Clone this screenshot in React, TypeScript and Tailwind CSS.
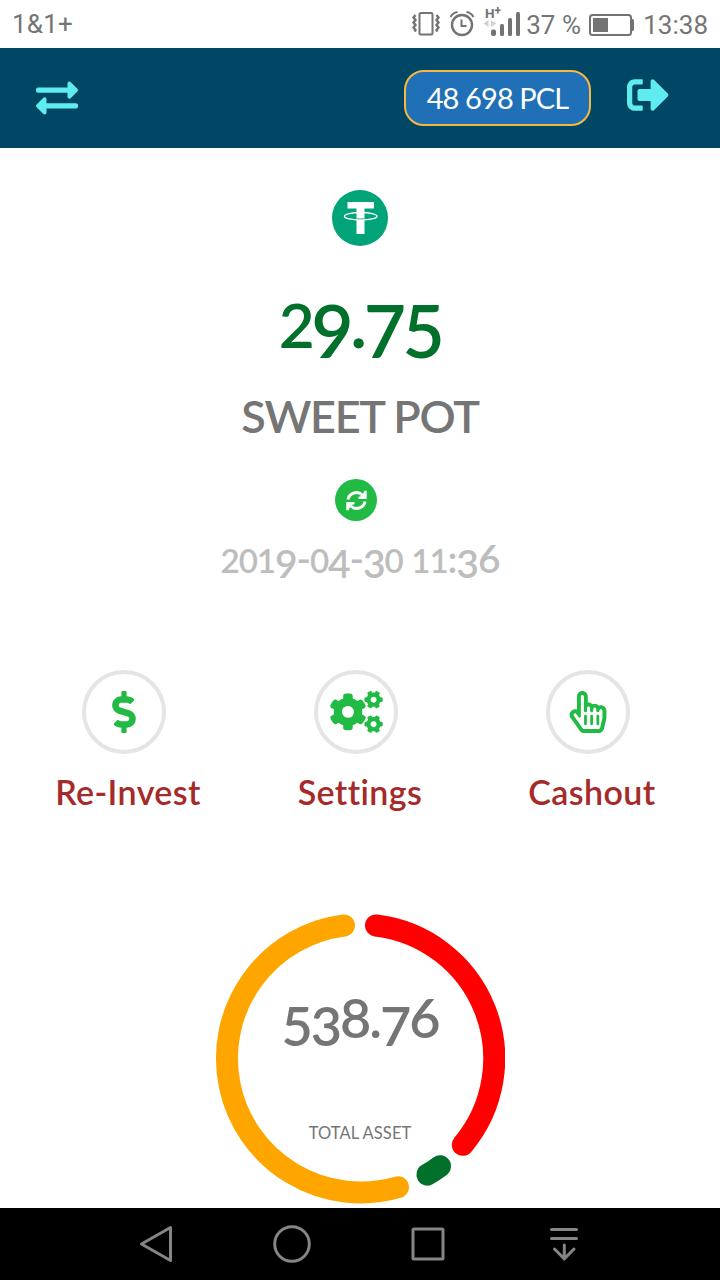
import type { ReactNode } from "react";
import { FaCogs, FaDollarSign, FaExchangeAlt, FaRegHandPointer, FaSignOutAlt } from "react-icons/fa";

interface Action {
  label: string;
  icon: ReactNode;
  tracking: string;
}

const ACTIONS: Action[] = [
  { label: "Re-Invest", icon: <FaDollarSign className="h-[42px] w-auto" />, tracking: "tracking-[0.4px]" },
  { label: "Settings", icon: <FaCogs className="h-[42px] w-[53px] shrink-0" />, tracking: "tracking-[0.4px]" },
  { label: "Cashout", icon: <FaRegHandPointer className="h-[42px] w-auto" />, tracking: "tracking-[0.4px]" },
];

// Donut segments, drawn clockwise around (145, 145) with r = 134.
const SEGMENTS = [
  { color: "#ff0000", d: "M161 11.5A134 134 0 0 1 247.8 230.8" },
  { color: "#00702a", d: "M225 252.2A134 134 0 0 1 212.4 260.6" },
  { color: "#ffa500", d: "M183 273.2A134 134 0 1 1 129 11.5" },
];

// Old-style figures: 0-2 sit at x-height, 3 4 5 7 9 hang below the baseline.
function OldStyle({ value }: { value: string }) {
  return (
    <>
      {value.split("").map((c, i) => {
        if ("012".includes(c)) return <span key={i} className="text-[0.85em] leading-[0]">{c}</span>;
        if ("34579".includes(c)) return <span key={i} className="align-[-0.14em] leading-[0]">{c}</span>;
        return <span key={i}>{c}</span>;
      })}
    </>
  );
}

function StatusBar() {
  return (
    <div className="flex h-12 items-center bg-white pl-3 pr-[12px] font-['Roboto'] text-[26px] leading-[48px] text-[#757575]">
      <span className="tracking-[0.2px]">1&amp;1+</span>
      <svg className="ml-auto h-12 w-[112px] shrink-0" viewBox="410 0 112 48" fill="none" stroke="#737373" strokeWidth="2">
        {/* vibrate */}
        <rect x="419.5" y="13" width="13" height="21.5" rx="1.5" />
        <path d="M415.500 15l-2 2.500 2 2.500-2 2.500 2 2.500-2 2.500 2 2.500-1 1.500M436.500 15l2 2.500-2 2.500 2 2.500-2 2.500 2 2.500-2 2.500 1 1.500" strokeWidth="2.400" />
        {/* alarm */}
        <circle cx="462" cy="25" r="10" strokeWidth="2.400" />
        <path d="M461.500 19.500v6.500h5M450.500 17q2-4 7-5M473.500 17q-2-4-7-5" />
        {/* signal */}
        <g stroke="none" fill="#737373">
          <rect x="491" y="29.500" width="5" height="6.500" rx="2" />
          <rect x="500" y="24" width="4" height="12" rx="1.500" />
          <rect x="508" y="18" width="4" height="18" rx="1.500" />
          <rect x="516" y="12" width="4" height="24" rx="1.500" />
          <path d="M483.500 23.500l5-3.500v7zM496 23.500l-5-3.500v7z" fill="#d0d0d0" />
          <text x="485" y="18" fontSize="13.500" fontWeight="700" fontFamily="Roboto">H</text>
          <text x="494.500" y="15" fontSize="12" fontWeight="700" fontFamily="Roboto">+</text>
        </g>
      </svg>
      <span className="ml-1 w-[54px] whitespace-nowrap pt-[1px]">37 %</span>
      <svg className="ml-[8px] h-12 w-[46px] shrink-0" viewBox="588 0 46 48" fill="none">
        <rect x="590" y="15" width="41" height="20" rx="2.500" stroke="#737373" strokeWidth="2" />
        <rect x="593" y="18" width="15" height="14" fill="#737373" />
        <path d="M632 19h.5q1.500 0 1.500 1.500v9q0 1.500-1.500 1.500h-.5z" fill="#737373" />
      </svg>
      <span className="ml-[9px] pt-[1px]">13:38</span>
    </div>
  );
}

function Header() {
  return (
    <header className="flex h-[100px] items-center bg-[#004766] px-9 text-[#5eecef]">
      <FaExchangeAlt className="size-[42px]" />
      <div className="ml-auto mr-9 flex h-14 w-[187px] items-center justify-center rounded-[20px] border-2 border-[#f5b942] bg-[#1f70b6] text-[29px] text-white">
        <span className="whitespace-nowrap tracking-[-0.9px]">48 698 PCL</span>
      </div>
      <FaSignOutAlt className="mb-[6px] mr-[15px] size-[42px]" />
    </header>
  );
}

function TetherLogo() {
  return (
    <svg className="mx-auto size-14 shrink-0" viewBox="0 0 56 56">
      <circle cx="28" cy="28" r="28" fill="#00a478" />
      <path d="M15.500 12h26.500v6.500H32.500V44h-8V18.500h-9z" fill="#fff" />
      <ellipse cx="28.700" cy="26.300" rx="16.300" ry="3.800" fill="none" stroke="#fff" strokeWidth="1.300" />
      <path d="M24.500 28.700q4 .5 8 0" stroke="#00a478" strokeWidth="0.800" fill="none" />
    </svg>
  );
}

function RefreshIcon() {
  return (
    <svg className="size-[21px]" viewBox="0 0 21 21">
      <path d="M1.900 9.500A8.600 8.600 0 0 1 16.500 5.200M19.100 11.500A8.600 8.600 0 0 1 4.500 15.800" fill="none" stroke="#fff" strokeWidth="3" />
      <path d="M20.700.8V9h-8.200v-2.300l3.500-.7 2.400-5.200zM.3 20.200V12h8.200v2.300L5 15l-2.400 5.200z" fill="#fff" />
    </svg>
  );
}

function AssetChart() {
  return (
    <div className="relative mx-auto mt-[101px] h-[290px] w-[290px] shrink-0 text-center text-[#757575]">
      <svg className="size-full" viewBox="0 0 290 290" fill="none" strokeWidth="22" strokeLinecap="round">
        {SEGMENTS.map((s) => (
          <path key={s.color} d={s.d} stroke={s.color} />
        ))}
      </svg>
      <div className="absolute inset-0 flex flex-col items-center pt-[71px]">
        <p className="h-[65px] whitespace-nowrap text-[54px] font-semibold leading-[65px] tracking-[-2.1px]">
          <OldStyle value="538.76" />
        </p>
        <p className="mt-[73px] whitespace-nowrap text-[16.5px] leading-5 tracking-[0.1px]">TOTAL ASSET</p>
      </div>
    </div>
  );
}

function NavBar() {
  return (
    <nav className="grid h-[72px] grid-cols-4 items-center justify-items-center bg-black px-[88px]">
      <svg className="size-10" viewBox="0 0 40 40" fill="none" stroke="#858585" strokeWidth="3" strokeLinejoin="round">
        <path d="M5.500 20L34.500 3.500v33z" />
      </svg>
      <svg className="size-10" viewBox="0 0 40 40" fill="none" stroke="#858585" strokeWidth="3">
        <circle cx="20" cy="20" r="17.300" />
      </svg>
      <svg className="size-10" viewBox="0 0 40 40" fill="none" stroke="#858585" strokeWidth="3">
        <rect x="5" y="5" width="30" height="30" rx="1" />
      </svg>
      <svg className="size-10" viewBox="0 0 40 40" fill="none" stroke="#858585" strokeWidth="3" strokeLinecap="round">
        <path d="M7.500 5.500h25M7.500 14.500h25M20.300 21v13.500M10.500 25l9.800 9.800L30 25" />
      </svg>
    </nav>
  );
}

export default function App() {
  return (
    <div className="flex h-[1280px] w-[720px] flex-col overflow-hidden bg-white font-['Lato',sans-serif]">
      <StatusBar />
      <Header />
      <main className="flex h-[1060px] flex-col pt-[42px] text-center">
        <TetherLogo />
        <p className="mt-[30px] h-[88px] whitespace-nowrap text-[73px] font-semibold leading-[88px] tracking-[-3.6px] text-[#00702a]">
          <OldStyle value="29.75" />
        </p>
        <h1 className="mt-[25px] h-[54px] whitespace-nowrap text-[45px] font-semibold leading-[54px] tracking-[-1.3px] text-[#757575]">
          SWEET POT
        </h1>
        <button className="ml-[335px] mt-[36px] flex size-[42px] shrink-0 items-center justify-center rounded-full bg-[#21ba45]">
          <RefreshIcon />
        </button>
        <p className="mt-[13px] h-[48px] whitespace-nowrap text-[39px] font-semibold leading-[48px] tracking-[-1.1px] text-[#bdbdbd]">
          <OldStyle value="2019-04-30 11:36" />
        </p>
        <div className="mt-[88px] grid grid-cols-3 px-3">
          {ACTIONS.map((a) => (
            <button key={a.label} className="flex flex-col items-center">
              <span className="mr-[8px] flex size-[84px] items-center justify-center rounded-full border-4 border-[#e5e5e5] text-[#21ba45]">
                {a.icon}
              </span>
              <span className={`mt-[17px] h-[42px] text-[34px] font-semibold leading-[42px] text-[#a52a2a] ${a.tracking}`}>{a.label}</span>
            </button>
          ))}
        </div>
        <AssetChart />
      </main>
      <NavBar />
    </div>
  );
}
